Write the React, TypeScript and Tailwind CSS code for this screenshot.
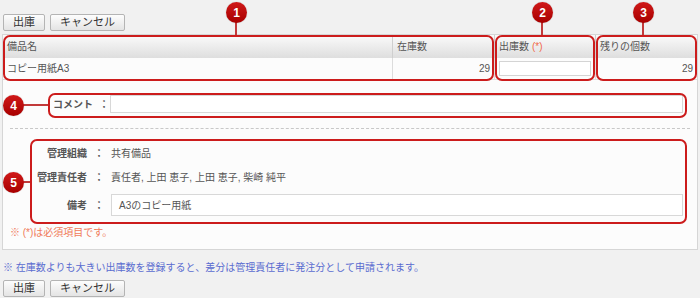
import React from 'react'

const FONT = "font-['Liberation_Sans','Noto_Sans_CJK_JP',sans-serif]"

function Btn({ children, w }: { children: React.ReactNode; w: string }) {
  return (
    <button
      className={`${w} h-[17px] border border-[#b4b4b4] rounded-[2px] bg-gradient-to-b from-[#fdfdfd] to-[#e4e4e4] text-[11px] leading-none text-[#333] flex items-center justify-center`}
    >
      {children}
    </button>
  )
}

function Marker({ n, cls }: { n: number; cls: string }) {
  return (
    <div
      className={`absolute ${cls} w-[21px] h-[21px] rounded-full bg-gradient-to-b from-[#d01818] to-[#a80000] text-white text-[12px] font-bold leading-none flex items-center justify-center shadow-[0_0_1px_rgba(0,0,0,0.4)]`}
    >
      {n}
    </div>
  )
}

const HEAD = 'h-[23px] bg-gradient-to-b from-[#fbfbfb] to-[#dedede] flex items-center px-[4px] text-[#555]'
const CELL = 'h-[22px] flex items-center px-[4px] text-[#555] border-b border-[#dcdcdc]'
const LABEL = 'w-[84px] text-right font-bold text-[#555]'
const COLON = 'w-[24px] text-center font-bold text-[#555]'

export default function App() {
  return (
    <div className={`relative w-[700px] h-[298px] overflow-hidden bg-[#f1f1f1] ${FONT} text-[10px]`}>
      {/* top actions */}
      <div className="pt-[14px] pl-[3px] flex gap-[5px]">
        <Btn w="w-[42px]">出庫</Btn>
        <Btn w="w-[75px]">キャンセル</Btn>
      </div>

      {/* main panel */}
      <div className="mt-[3px] ml-[2px] w-[696px] h-[216px] border border-[#d6d6d6] bg-[#fcfcfc] flex flex-col">
        <div className="grid grid-cols-[389px_102px_101px_102px]">
          <div className={HEAD}>備品名</div>
          <div className={`${HEAD} border-l border-[#cfcfcf]`}>在庫数</div>
          <div className={`${HEAD} border-l border-[#cfcfcf]`}>
            出庫数<span className="text-[#f06a4a] ml-[3px]">(*)</span>
          </div>
          <div className={`${HEAD} border-l border-[#cfcfcf]`}>残りの個数</div>

          <div className={CELL}>コピー用紙A3</div>
          <div className={`${CELL} border-l border-l-[#dcdcdc] justify-end`}>29</div>
          <div className={`${CELL} border-l border-l-[#dcdcdc]`}>
            <div className="w-[93px] h-[15px] border border-[#d4d4d4] bg-white" />
          </div>
          <div className={`${CELL} border-l border-l-[#dcdcdc] justify-end`}>29</div>
        </div>

        {/* comment */}
        <div className="mt-[15px] h-[18px] pl-[50px] flex items-center">
          <div className="w-[45px] font-bold text-[#555]">コメント</div>
          <div className="w-[12px] text-center font-bold text-[#555]">：</div>
          <div className="w-[573px] h-[18px] border border-[#d8d8d8] bg-white" />
        </div>

        <div className="mt-[15px] mx-[7px] border-t border-dashed border-[#c8c8c8]" />

        {/* info block */}
        <div className="mt-[10px] flex flex-col">
          <div className="h-[24px] mt-[2px] flex items-center">
            <div className={LABEL}>管理組織</div>
            <div className={COLON}>：</div>
            <div className="text-[#555]">共有備品</div>
          </div>
          <div className="h-[24px] flex items-center">
            <div className={LABEL}>管理責任者</div>
            <div className={COLON}>：</div>
            <div className="text-[#555]">責任者, 上田 恵子, 上田 恵子, 柴崎 純平</div>
          </div>
          <div className="h-[22px] mt-[5px] flex items-center">
            <div className={LABEL}>備考</div>
            <div className={COLON}>：</div>
            <div className="w-[572px] h-[22px] border border-[#d8d8d8] bg-white flex items-center px-[7px] text-[#555]">
              A3のコピー用紙
            </div>
          </div>
        </div>

        <div className="mt-[9px] pl-[7px] text-[#f07a5a]">※ (*)は必須項目です。</div>
      </div>

      <div className="mt-[10px] pl-[3px] text-[#5a6cd0]">
        ※ 在庫数よりも大きい出庫数を登録すると、差分は管理責任者に発注分として申請されます。
      </div>

      <div className="mt-[5px] pl-[3px] flex gap-[5px]">
        <Btn w="w-[42px]">出庫</Btn>
        <Btn w="w-[75px]">キャンセル</Btn>
      </div>

      {/* annotation outlines */}
      <div className="absolute left-[3px] top-[35px] w-[491px] h-[46px] border-2 border-[#cc1c1c] rounded-[7px] pointer-events-none" />
      <div className="absolute left-[495px] top-[35px] w-[100px] h-[46px] border-2 border-[#cc1c1c] rounded-[7px] pointer-events-none" />
      <div className="absolute left-[596px] top-[35px] w-[101px] h-[46px] border-2 border-[#cc1c1c] rounded-[7px] pointer-events-none" />
      <div className="absolute left-[48px] top-[93px] w-[639px] h-[25px] border-2 border-[#cc1c1c] rounded-[7px] pointer-events-none" />
      <div className="absolute left-[30px] top-[139px] w-[657px] h-[85px] border-2 border-[#cc1c1c] rounded-[7px] pointer-events-none" />

      {/* connector lines */}
      <div className="absolute left-[235px] top-[20px] w-[2px] h-[15px] bg-[#c23a3a]" />
      <div className="absolute left-[541px] top-[20px] w-[2px] h-[15px] bg-[#c23a3a]" />
      <div className="absolute left-[642px] top-[20px] w-[2px] h-[15px] bg-[#c23a3a]" />
      <div className="absolute left-[22px] top-[104px] w-[26px] h-[2px] bg-[#c23a3a]" />
      <div className="absolute left-[22px] top-[181px] w-[8px] h-[2px] bg-[#c23a3a]" />

      <Marker n={1} cls="left-[226px] top-[2px]" />
      <Marker n={2} cls="left-[532px] top-[2px]" />
      <Marker n={3} cls="left-[633px] top-[2px]" />
      <Marker n={4} cls="left-[3px] top-[95px]" />
      <Marker n={5} cls="left-[3px] top-[172px]" />
    </div>
  )
}
